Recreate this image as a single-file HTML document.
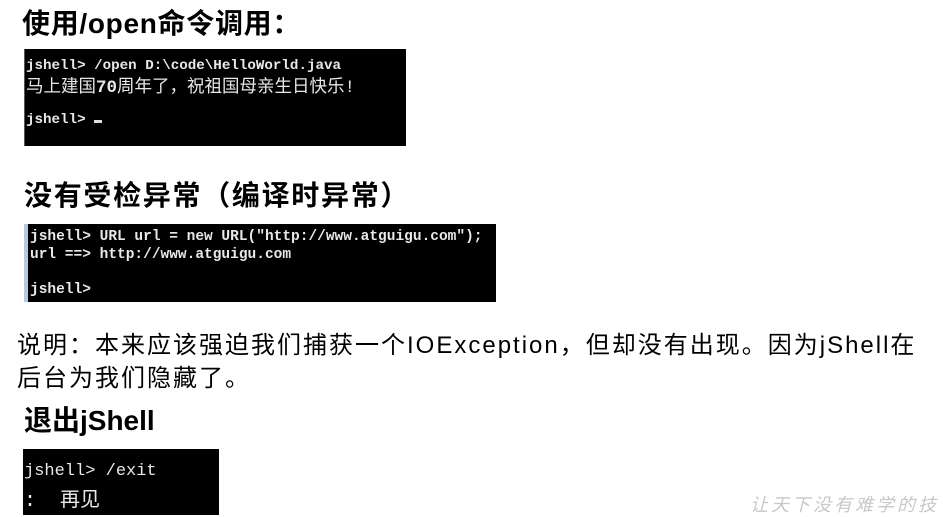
<!DOCTYPE html>
<html><head><meta charset="utf-8"><style>
body{margin:0;width:943px;height:515px;background:#fff;position:relative;overflow:hidden;font-family:"Liberation Sans","Noto Sans CJK SC",sans-serif;}
.t{position:absolute;white-space:nowrap;color:#000;}
.h{font-size:28px;font-weight:bold;}
.box{position:absolute;background:#000;}
.m{position:absolute;white-space:pre;color:#e8e8e8;font-family:"Liberation Mono","Noto Sans CJK SC",monospace;font-weight:bold;}
</style></head><body>
<div class="t h" style="left:22px;top:2px;letter-spacing:0.7px;">使用/open命令调用：</div>
<div class="box" style="left:24px;top:49px;width:381px;height:97px;border-left:1px solid #556;"></div>
<div class="m" style="left:26px;top:58px;font-size:14.2px;">jshell&gt; /open D:\code\HelloWorld.java</div>
<div class="m" style="left:26px;top:73px;font-size:17.5px;font-weight:normal;">马上建国<b>70</b>周年了，祝祖国母亲生日快乐!</div>
<div class="m" style="left:26px;top:112px;font-size:14.2px;">jshell&gt; <span style="display:inline-block;width:8px;height:3px;background:#ddd;"></span></div>

<div class="t h" style="left:24px;top:174px;letter-spacing:1.7px;">没有受检异常（编译时异常）</div>
<div class="box" style="left:24px;top:224px;width:472px;height:78px;border-left:4px solid #b8c8e0;box-sizing:border-box;"></div>
<div class="m" style="left:30px;top:229px;font-size:14.5px;">jshell&gt; URL url = new URL("http://www.atguigu.com");</div>
<div class="m" style="left:30px;top:247px;font-size:14.5px;">url ==&gt; http://www.atguigu.com</div>
<div class="m" style="left:30px;top:282px;font-size:14.5px;">jshell&gt;</div>

<div class="t" style="left:17px;top:325px;font-size:24px;letter-spacing:2px;">说明：本来应该强迫我们捕获一个IOException，但却没有出现。因为jShell在</div>
<div class="t" style="left:17px;top:358px;font-size:24px;letter-spacing:2px;">后台为我们隐藏了。</div>

<div class="t h" style="left:24px;top:399px;">退出jShell</div>
<div class="box" style="left:23px;top:449px;width:196px;height:66px;"></div>
<div class="m" style="left:24px;top:462px;font-size:17px;font-weight:normal;">jshell&gt; /exit</div>
<div class="m" style="left:24px;top:483px;font-size:20px;font-weight:normal;">:  再见</div>

<div class="t" style="left:750px;top:491px;font-size:18px;color:#c8c8c8;font-style:italic;letter-spacing:3px;">让天下没有难学的技</div>
</body></html>
